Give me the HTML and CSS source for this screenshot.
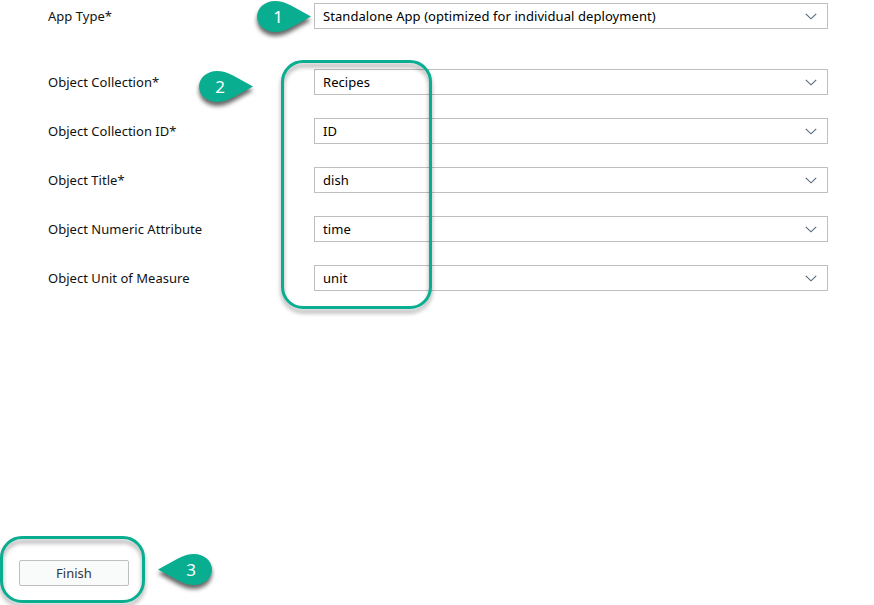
FILE: index.html
```html
<!DOCTYPE html>
<html lang="en">
<head>
<meta charset="utf-8">
<title>App configuration</title>
<link rel="stylesheet" href="styles.css">
</head>
<body>
<main class="page">
  <form class="form">
    <div class="row row-first"><span class="label">App Type*</span><div class="select"><span>Standalone App (optimized for individual deployment)</span><svg class="chevron" viewBox="0 0 12 7"><path d="M.8.8 6 5.8 11.2.8"/></svg></div></div>
    <div class="row"><span class="label">Object Collection*</span><div class="select"><span>Recipes</span><svg class="chevron" viewBox="0 0 12 7"><path d="M.8.8 6 5.8 11.2.8"/></svg></div></div>
    <div class="row"><span class="label">Object Collection ID*</span><div class="select"><span>ID</span><svg class="chevron" viewBox="0 0 12 7"><path d="M.8.8 6 5.8 11.2.8"/></svg></div></div>
    <div class="row"><span class="label">Object Title*</span><div class="select"><span>dish</span><svg class="chevron" viewBox="0 0 12 7"><path d="M.8.8 6 5.8 11.2.8"/></svg></div></div>
    <div class="row"><span class="label">Object Numeric Attribute</span><div class="select"><span>time</span><svg class="chevron" viewBox="0 0 12 7"><path d="M.8.8 6 5.8 11.2.8"/></svg></div></div>
    <div class="row"><span class="label">Object Unit of Measure</span><div class="select"><span>unit</span><svg class="chevron" viewBox="0 0 12 7"><path d="M.8.8 6 5.8 11.2.8"/></svg></div></div>
  </form>
  <footer class="footer"><button class="finish" type="button">Finish</button></footer>

  <div class="frame frame-fields"></div>
  <div class="frame frame-finish"></div>
  <div class="marker marker-1"><svg viewBox="0 0 54 31"><path d="M54 15.5 34 4.6C28 1.4 23 0 18 0 8 0 0 7 0 15.5S8 31 18 31c5 0 10-1.4 16-4.6Z"/></svg><span>1</span></div>
  <div class="marker marker-2"><svg viewBox="0 0 54 31"><path d="M54 15.5 34 4.6C28 1.4 23 0 18 0 8 0 0 7 0 15.5S8 31 18 31c5 0 10-1.4 16-4.6Z"/></svg><span>2</span></div>
  <div class="marker marker-3"><svg viewBox="0 0 54 31"><path d="M0 15.5 20 4.6C26 1.4 31 0 36 0c10 0 18 7 18 15.5S46 31 36 31c-5 0-10-1.4-16-4.6Z"/></svg><span>3</span></div>
</main>
</body>
</html>
```
FILE: styles.css
```css
* { box-sizing: border-box; }
body {
  margin: 0;
  background: #fff;
  color: #000;
  font: 13px/24px "Noto Sans", "Liberation Sans", sans-serif;
}
.page {
  position: relative;
  display: flex;
  flex-direction: column;
  justify-content: space-between;
  height: 605px;
  padding: 3px 46px 19px 19px;
  overflow: hidden;
}
.form { display: flex; flex-direction: column; gap: 23px; padding-left: 29px; }
.row { display: grid; grid-template-columns: 266px 514px; height: 26px; align-items: center; }
.row-first { margin-bottom: 17px; }
.label { color: #111; letter-spacing: .03px; white-space: nowrap; }
.select {
  display: flex;
  align-items: center;
  justify-content: space-between;
  height: 26px;
  padding: 0 10px 0 8px;
  border: 1px solid #bfbfbf;
  background: #fff;
  letter-spacing: .07px;
}
.chevron { width: 12px; height: 7px; fill: none; stroke: #53657a; stroke-width: 1.1; }
.finish {
  width: 110px;
  height: 26px;
  padding: 0;
  border: 1px solid #bfbfbf;
  border-radius: 2px;
  background: #f9fbfb;
  color: #32363a;
  font: inherit;
}
.footer { display: flex; }
.frame {
  position: absolute;
  border: 3px solid #09ae91;
  filter: drop-shadow(0 4px 2px rgba(0, 0, 0, .36));
}
.frame-fields { left: 281px; top: 60px; width: 151px; height: 249px; border-radius: 22px; }
.frame-finish { left: 0; top: 536px; width: 145px; height: 67px; border-radius: 22px; }
.marker {
  position: absolute;
  width: 54px;
  height: 31px;
  color: #fff;
  font-size: 17px;
  line-height: 31px;
}
.marker svg {
  display: block;
  width: 54px;
  height: 31px;
  fill: #09ae91;
  overflow: visible;
  filter: drop-shadow(0 4px 2px rgba(0, 0, 0, .6));
}
.marker span { position: absolute; top: 0; left: 0; width: 42px; text-align: center; }
.marker-1 { left: 257px; top: .5px; }
.marker-2 { left: 199px; top: 70.5px; }
.marker-3 { left: 158px; top: 553.5px; }
.marker-3 span { left: 12px; }
```
